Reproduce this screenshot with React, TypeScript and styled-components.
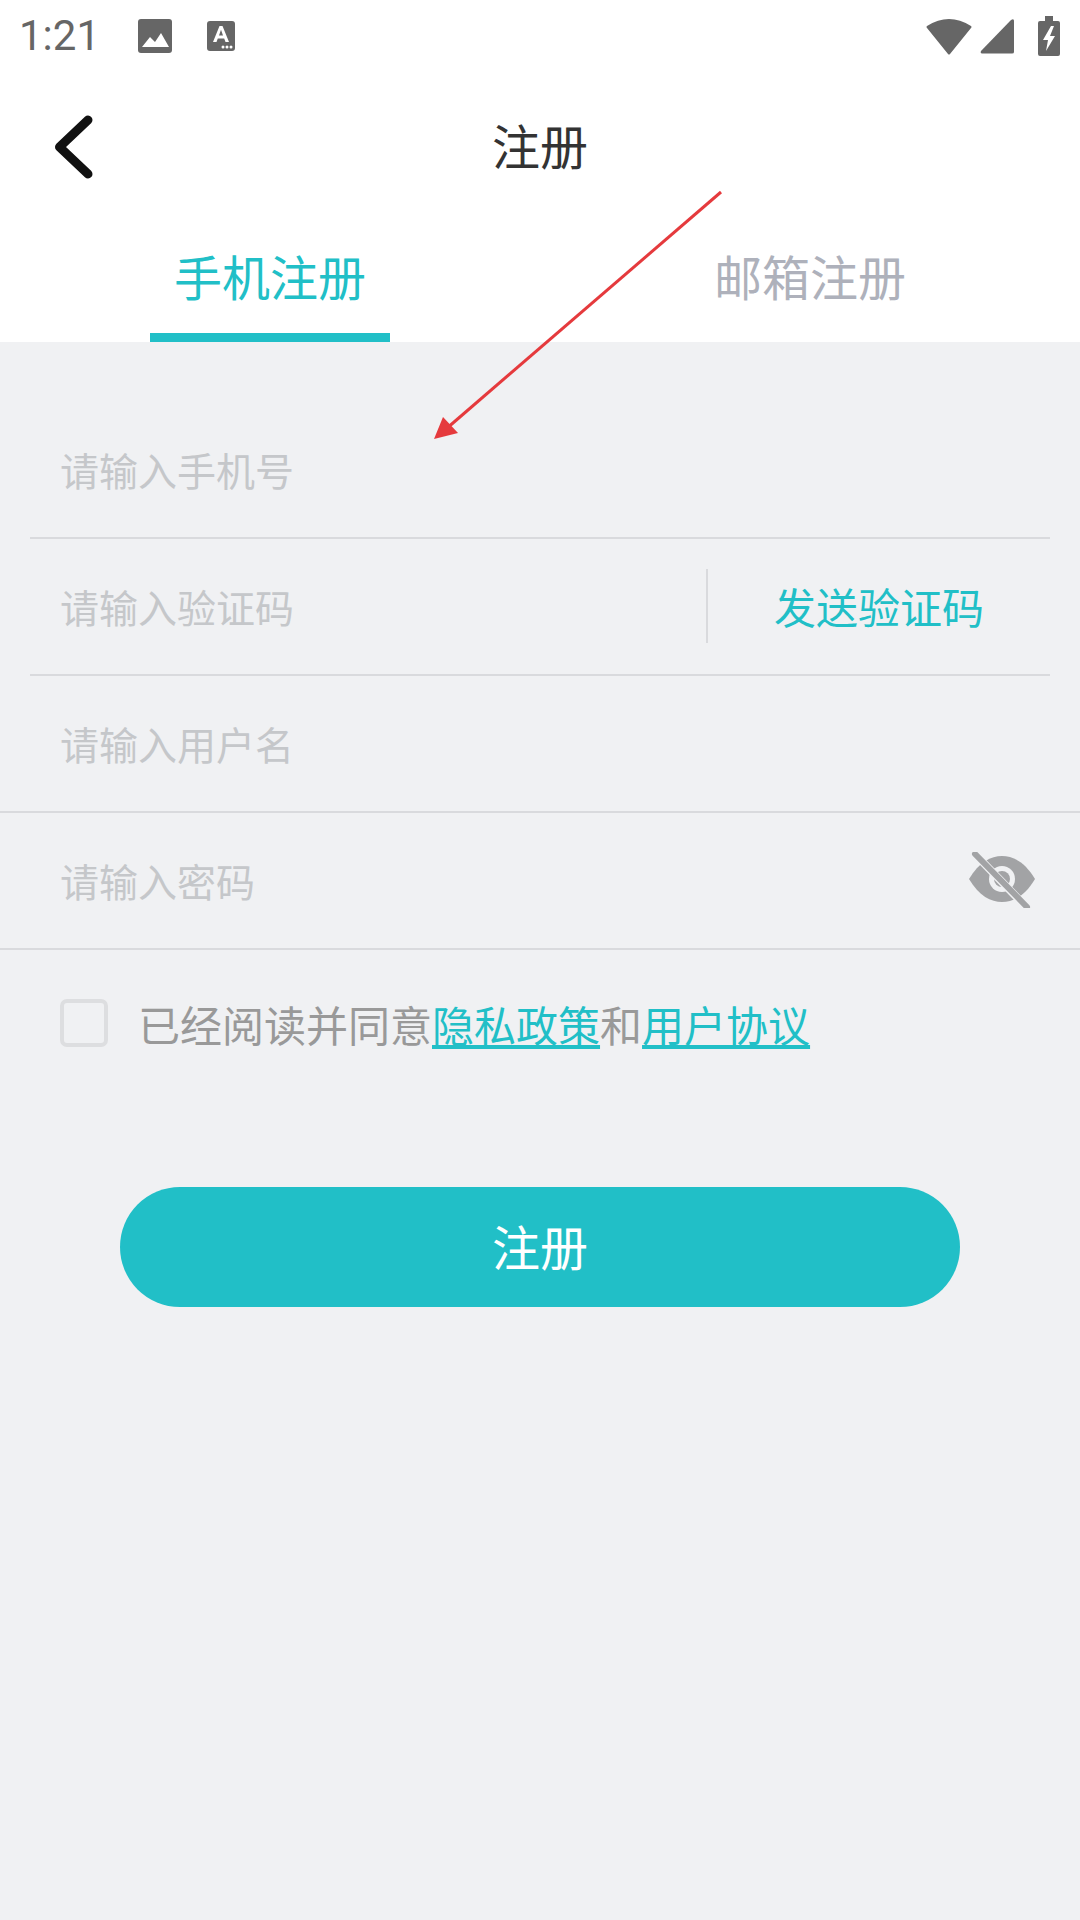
import React from "react";
import styled, { createGlobalStyle } from "styled-components";

const GlobalStyle = createGlobalStyle`
  html, body {
    margin: 0;
    padding: 0;
    background: #f0f1f3;
    font-family: "Noto Sans CJK SC", "Noto Sans", sans-serif;
  }
`;

const Page = styled.div`
  position: relative;
  display: flex;
  flex-direction: column;
  width: 1080px;
  height: 1920px;
  overflow: hidden;
  background: #f0f1f3;
`;

const Head = styled.header`
  background: #fff;
`;

const StatusBar = styled.div`
  display: flex;
  align-items: center;
  height: 72px;
  padding: 0 20px 0 19px;
  color: #666;
`;

const Clock = styled.span`
  width: 118px;
  font-family: Roboto, sans-serif;
  font-size: 42px;
  line-height: 72px;
`;

const StatusRight = styled.div`
  display: flex;
  align-items: center;
  margin-left: auto;
`;

const Icon = styled.svg`
  display: block;
  flex: none;
`;

const NavBar = styled.div`
  position: relative;
  display: flex;
  align-items: center;
  justify-content: center;
  box-sizing: border-box;
  height: 150px;
  padding-bottom: 6px;
`;

const BackButton = styled.div`
  position: absolute;
  left: 50px;
  top: 40px;
`;

const Title = styled.h1`
  margin: 0;
  font-size: 48px;
  font-weight: 400;
  color: #333;
`;

const Tabs = styled.div`
  display: flex;
  height: 120px;
`;

const Tab = styled.div<{ $active?: boolean }>`
  position: relative;
  flex: 1;
  padding-top: 11px;
  text-align: center;
  font-size: 48px;
  line-height: 84px;
  color: ${(p) => (p.$active ? "#21bfc7" : "#aeb1bb")};

  &::after {
    content: "";
    display: ${(p) => (p.$active ? "block" : "none")};
    position: absolute;
    left: 150px;
    bottom: 0;
    width: 240px;
    height: 9px;
    background: #21bfc7;
  }
`;

const Form = styled.section`
  padding-top: 60px;
`;

const Row = styled.div<{ $inset?: boolean }>`
  display: flex;
  align-items: center;
  box-sizing: border-box;
  height: 137px;
  margin: 0 ${(p) => (p.$inset ? "30px" : "0")};
  padding: 0 0 2px ${(p) => (p.$inset ? "30px" : "60px")};
  border-bottom: 2px solid #d9dadd;
`;

const Placeholder = styled.span`
  flex: 1;
  font-size: 39px;
  color: #c5c7ca;
`;

const SendCode = styled.div`
  display: flex;
  align-items: center;
  justify-content: center;
  width: 342px;
  height: 74px;
  border-left: 2px solid #d9dadd;
  font-size: 42px;
  color: #21bfc7;
`;

const EyeButton = styled.div`
  margin-right: 45px;
`;

const Agreement = styled.div`
  display: flex;
  align-items: center;
  height: 48px;
  margin-top: 49px;
  padding-left: 60px;
  font-size: 42px;
  color: #999;
`;

const CheckBox = styled.div`
  flex: none;
  box-sizing: border-box;
  width: 48px;
  height: 48px;
  margin-right: 30px;
  border: 4px solid #dddee0;
  border-radius: 7px;
`;

const DocLink = styled.span`
  color: #21bfc7;
  text-decoration: underline;
`;

const SubmitButton = styled.div`
  display: flex;
  align-items: center;
  justify-content: center;
  box-sizing: border-box;
  width: 840px;
  height: 120px;
  margin: 140px auto 0;
  padding-bottom: 4px;
  border-radius: 60px;
  background: #21bfc7;
  font-size: 48px;
  color: #fff;
`;

const ArrowMark = styled.svg`
  position: absolute;
  left: 0;
  top: 0;
  pointer-events: none;
`;

const App = () => {
  return (
    <Page>
      <GlobalStyle />
      <Head>
        <StatusBar>
          <Clock>1:21</Clock>
          <Icon width="36" height="36" viewBox="0 0 36 36" style={{ marginRight: 33 }}>
            <rect x="1" y="1" width="34" height="34" rx="3" fill="#666" />
            <path d="M5 29 L13 19 L18 24 L24 15 L32 29 Z" fill="#fff" />
          </Icon>
          <Icon width="30" height="32" viewBox="0 0 30 32">
            <rect x="1" y="1" width="28" height="30" rx="3" fill="#666" />
            <path d="M7 22 L13.5 6 L16.5 6 L23 22 L19.5 22 L18.2 18.5 L11.8 18.5 L10.5 22 Z M13 15.5 L17 15.5 L15 9.8 Z" fill="#fff" fillRule="evenodd" />
            <circle cx="17" cy="27" r="1.5" fill="#fff" />
            <circle cx="21" cy="27" r="1.5" fill="#fff" />
            <circle cx="25" cy="27" r="1.5" fill="#fff" />
          </Icon>
          <StatusRight>
            <Icon width="46" height="37" viewBox="0 0 46 37" style={{ marginRight: 8 }}>
              <path d="M1 8 Q23 -6 45 8 Q46 9 45 10 L24 36 Q23 37 22 36 L1 10 Q0 9 1 8 Z" fill="#666" />
            </Icon>
            <Icon width="35" height="36" viewBox="0 0 35 36" style={{ marginRight: 23 }}>
              <path d="M1 33 L31 2 Q34 0 34 3 L34 34 Q34 35.500 32 35.500 L2 35.500 Q0 35 1 33 Z" fill="#666" />
            </Icon>
            <Icon width="22" height="40" viewBox="0 0 22 40">
              <path d="M7 0 H15 V5 H20 Q22 5 22 7 V38 Q22 40 20 40 H2 Q0 40 0 38 V7 Q0 5 2 5 H7 Z" fill="#666" />
              <path d="M13 10 L5 24 H10 L8 35 L17 20 H12 L16 10 Z" fill="#fff" />
            </Icon>
          </StatusRight>
        </StatusBar>
        <NavBar>
          <BackButton>
            <Icon width="48" height="72" viewBox="0 0 48 72">
              <path d="M38 8 L9.500 35 L38 62" fill="none" stroke="#111" strokeWidth="9" strokeLinecap="round" strokeLinejoin="round" />
            </Icon>
          </BackButton>
          <Title>注册</Title>
        </NavBar>
        <Tabs>
          <Tab $active>手机注册</Tab>
          <Tab>邮箱注册</Tab>
        </Tabs>
      </Head>
      <Form>
        <Row $inset>
          <Placeholder>请输入手机号</Placeholder>
        </Row>
        <Row $inset>
          <Placeholder>请输入验证码</Placeholder>
          <SendCode>发送验证码</SendCode>
        </Row>
        <Row>
          <Placeholder>请输入用户名</Placeholder>
        </Row>
        <Row>
          <Placeholder>请输入密码</Placeholder>
          <EyeButton>
            <Icon width="66" height="56" viewBox="0 0 66 56">
              <path d="M0 27 C10 10 22 4 33 4 C44 4 56 10 66 27 C56 44 44 50 33 50 C22 50 10 44 0 27 Z" fill="#a2a3a5" />
              <circle cx="33" cy="27" r="13" fill="#f0f1f3" />
              <circle cx="33" cy="27" r="8" fill="#a2a3a5" />
              <path d="M4 0 L60 58" stroke="#f0f1f3" strokeWidth="8" />
              <path d="M6 2 L58 55" stroke="#a2a3a5" strokeWidth="6" strokeLinecap="round" />
            </Icon>
          </EyeButton>
        </Row>
        <Agreement>
          <CheckBox />
          已经阅读并同意<DocLink>隐私政策</DocLink>和<DocLink>用户协议</DocLink>
        </Agreement>
        <SubmitButton>注册</SubmitButton>
      </Form>
      <ArrowMark width="1080" height="1920" viewBox="0 0 1080 1920">
        <path d="M721 192 L446 429" stroke="#e53a3d" strokeWidth="3" />
        <path d="M434 439 L443 417 L458 433 Z" fill="#e53a3d" />
      </ArrowMark>
    </Page>
  );
};

export default App;
